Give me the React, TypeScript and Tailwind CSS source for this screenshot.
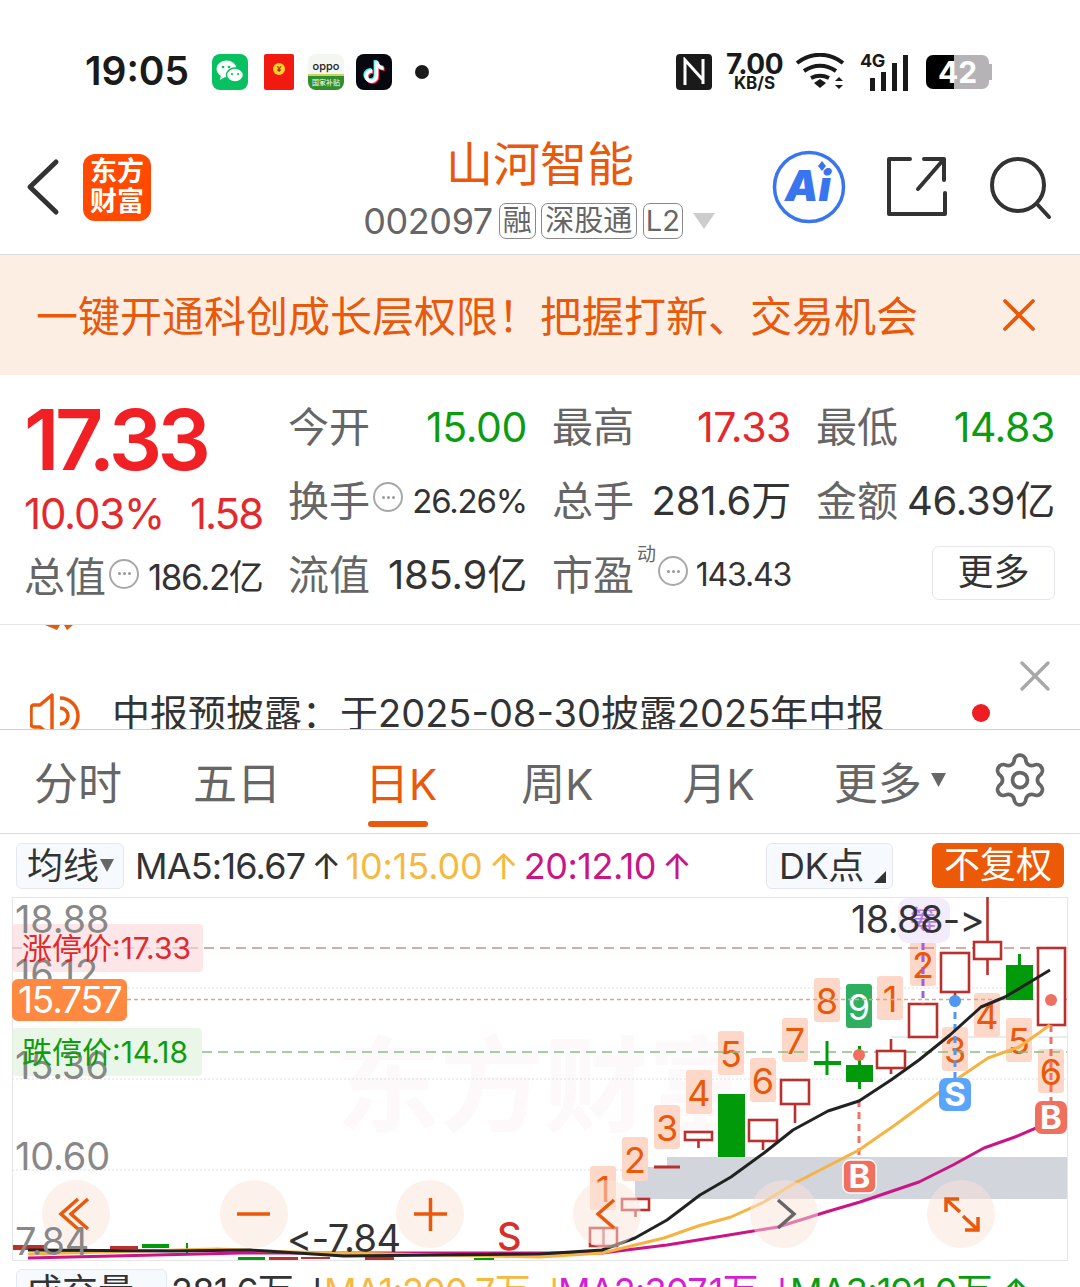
import React from "react";
import { X, Settings } from "lucide-react";
import { FaTiktok } from "react-icons/fa";

const ORANGE = "#e8590c";
const RED = "#b8312f";
const GREEN = "#009a0a";

// x, width, top, bottom, wick top, wick bottom
const hollow = [
  [590, 27, 1228, 1246, 1228, 1246],
  [622, 27, 1199, 1210, 1199, 1217],
  [685, 27, 1132, 1140, 1132, 1148],
  [749, 28, 1120, 1141, 1120, 1150],
  [781, 28, 1080, 1104, 1080, 1123],
  [877, 28, 1051, 1068, 1039, 1074],
  [909, 28, 1004, 1037, 1004, 1037],
  [941, 28, 953, 992, 953, 1000],
  [974, 27, 942, 959, 897, 975],
  [1038, 27, 948, 1025, 948, 1025],
];
const solid = [
  [718, 27, 1094, 1157, 1094, 1157],
  [846, 27, 1065, 1082, 1046, 1089],
  [1006, 27, 965, 1000, 954, 1000],
];
const badges = [
  ["1", 590, 1166], ["2", 622, 1137], ["3", 654, 1105], ["4", 686, 1070], ["5", 718, 1031],
  ["6", 750, 1058], ["7", 782, 1018], ["8", 814, 978], ["1", 877, 976], ["2", 910, 942],
  ["3", 942, 1027], ["4", 974, 993], ["5", 1006, 1018], ["6", 1038, 1049],
] as const;

const ma5 = "28,1250 172,1251 250,1250 344,1256 540,1254 602,1250 635,1238 667,1220 700,1195 731,1177 764,1153 793,1130 828,1111 859,1101 891,1080 919,1060 950,1035 981,1007 1005,997 1050,970";
const ma10 = "28,1254 103,1252 217,1249 293,1252 540,1257 602,1253 664,1238 698,1226 731,1217 764,1202 795,1183 826,1167 859,1150 895,1125 929,1100 960,1077 988,1058 1019,1047 1050,1025";
const ma20 = "28,1258 241,1253 540,1253 602,1253 667,1245 729,1235 778,1227 826,1212 860,1202 919,1182 953,1165 984,1148 1015,1137 1050,1122";

const Dots = () => (
  <span className="w-[30px] h-[30px] rounded-full border-[2px] border-[#a8a8a8] flex items-center justify-center gap-[2px] shrink-0 -translate-y-[4px]">
    <i className="w-[3px] h-[3px] rounded-full bg-[#999]" />
    <i className="w-[3px] h-[3px] rounded-full bg-[#999]" />
    <i className="w-[3px] h-[3px] rounded-full bg-[#999]" />
  </span>
);

const StatusBar = () => (
  <div className="h-[125px] relative flex items-center pl-[85px] pr-[88px] pt-[18px]">
    <span className="text-[39px] font-semibold text-[#1a1a1a] w-[127px]">19:05</span>
    <svg width="36" height="36" viewBox="0 0 36 36" className="rounded-[8px] bg-[#07c160]">
      <ellipse cx="14.5" cy="15" rx="10" ry="8.5" fill="#fff" />
      <path d="M9 21l-1 5 5-3z" fill="#fff" />
      <ellipse cx="23" cy="21" rx="8.5" ry="7" fill="#fff" stroke="#07c160" strokeWidth="1.5" />
      <circle cx="11" cy="13" r="1.3" fill="#07c160" />
      <circle cx="17" cy="13" r="1.3" fill="#07c160" />
      <circle cx="20" cy="20" r="1.1" fill="#07c160" />
      <circle cx="26" cy="20" r="1.1" fill="#07c160" />
    </svg>
    <div className="ml-[16px] w-[30px] h-[36px] bg-[#f21a10] rounded-[2px] flex items-center justify-center pb-[6px]">
      <span className="w-[12px] h-[12px] rounded-full bg-[#ffd21f] text-[8px] leading-[12px] text-center text-[#a33] font-bold">¥</span>
    </div>
    <div className="ml-[14px] w-[36px] h-[36px] rounded-[8px] overflow-hidden bg-[#f4f6f2] flex flex-col">
      <span className="h-[22px] text-[11px] leading-[24px] text-center text-[#222] font-medium border-b-[2px] border-[#c9d65a]">oppo</span>
      <span className="h-[14px] bg-[#2f8f2f] text-[7px] leading-[14px] text-center text-white whitespace-nowrap">国家补贴</span>
    </div>
    <div className="ml-[12px] w-[36px] h-[36px] rounded-[8px] bg-[#07070f] flex items-center justify-center relative">
      <FaTiktok className="absolute text-[#25f4ee] text-[22px] -translate-x-[1px] -translate-y-[1px]" />
      <FaTiktok className="absolute text-[#fe2c55] text-[22px] translate-x-[1px] translate-y-[1px]" />
      <FaTiktok className="absolute text-white text-[22px]" />
    </div>
    <span className="ml-[23px] w-[14px] h-[14px] rounded-full bg-[#1a1a1a]" />

    <div className="ml-auto flex items-center">
      <div className="w-[36px] h-[36px] rounded-[4px] bg-[#1a1a1a] flex items-center justify-center">
        <svg width="26" height="30" viewBox="0 0 26 30" fill="none" stroke="#fff" strokeWidth="3">
          <path d="M4 28V3l18 20M22 27V2" />
        </svg>
      </div>
      <div className="ml-[15px] w-[55px] flex flex-col items-center text-[#1a1a1a] font-bold">
        <span className="text-[28px] leading-[24px] tracking-[-0.5px]">7.00</span>
        <span className="text-[17px] leading-[15px]">KB/S</span>
      </div>
      <svg width="52" height="38" viewBox="0 0 52 38" className="ml-[13px]" fill="none" stroke="#1a1a1a" strokeWidth="4">
        <path d="M2 10c14-11 32-11 46 0M9 18c10-7 22-7 32 0M16 25c6-3 12-3 18 0" />
        <path d="M19 30l6-4 6 4-6 5z" fill="#1a1a1a" stroke="none" />
        <path d="M40 28l4-4 4 4zM40 32l4 4 4-4z" fill="#1a1a1a" stroke="none" />
      </svg>
      <div className="relative ml-[13px] w-[50px] h-[38px]">
        <span className="absolute left-0 -top-[2px] text-[18px] leading-[20px] font-bold text-[#1a1a1a] tracking-[-0.5px]">4G</span>
        <div className="absolute left-[10px] bottom-0 flex items-end gap-[6px]">
          <i className="w-[5px] h-[13px] bg-[#1a1a1a]" />
          <i className="w-[5px] h-[19px] bg-[#1a1a1a]" />
          <i className="w-[5px] h-[28px] bg-[#1a1a1a]" />
          <i className="w-[5px] h-[36px] bg-[#1a1a1a]" />
        </div>
      </div>
      <div className="relative ml-[16px] w-[66px] h-[34px] flex rounded-[7px] overflow-hidden">
        <span className="w-[28px] bg-black" />
        <span className="w-[35px] bg-[#b5b3b5] rounded-r-[7px]" />
        <span className="w-[3px] my-[9px] bg-[#b5b3b5]" />
        <span className="absolute left-[12px] top-0 text-[30px] leading-[34px] font-bold text-white">42</span>
      </div>
    </div>
  </div>
);

const Header = () => (
  <div className="h-[130px] border-b border-[#dcdcdc] flex items-start relative">
    <svg width="36" height="58" viewBox="0 0 36 58" className="absolute left-[25px] top-[33px]" fill="none" stroke="#333" strokeWidth="5" strokeLinecap="round" strokeLinejoin="round">
      <path d="M31 4L5 29l26 25" />
    </svg>
    <div className="absolute left-[83px] top-[29px] w-[68px] h-[67px] rounded-[12px] bg-[#ff4a00] text-white font-bold text-[27px] leading-[30px] text-center pt-[3px]">
      东方<br />财富
    </div>
    <div className="w-full flex flex-col items-center pt-[12px]">
      <span className="text-[47px] leading-[54px] text-[#e8590c]">山河智能</span>
      <div className="flex items-center mt-[10px] mr-[2px] text-[#666] h-[40px]">
        <span className="text-[36px] tracking-[-0.4px]">002097</span>
        <span className="ml-[6px] w-[37px] h-[36px] border border-[#888] rounded-[7px] text-[29px] leading-[33px] text-center">融</span>
        <span className="ml-[5px] w-[96px] h-[36px] border border-[#888] rounded-[7px] text-[29px] leading-[33px] text-center">深股通</span>
        <span className="ml-[6px] w-[40px] h-[36px] border border-[#888] rounded-[7px] text-[29px] leading-[33px] text-center">L2</span>
        <svg width="22" height="16" viewBox="0 0 22 16" className="ml-[10px]"><path d="M0 0h22L11 16z" fill="#cccccc" /></svg>
      </div>
    </div>
    <svg width="74" height="74" viewBox="0 0 74 74" className="absolute left-[772px] top-[25px]">
      <circle cx="37" cy="37" r="34.5" fill="none" stroke="#3a75f0" strokeWidth="3.5" />
      <text x="36" y="51" textAnchor="middle" fontSize="42" fontWeight="900" fontStyle="italic" fill="#3a75f0">Ai</text>
      <path d="M50 11l4 5-4 5-4-5z" fill="#3a75f0" />
    </svg>
    <svg width="60" height="62" viewBox="0 0 60 62" className="absolute left-[887px] top-[31px]" fill="none" stroke="#333" strokeWidth="4" strokeLinecap="round" strokeLinejoin="round">
      <path d="M23 3H2v55h56V37M31 33L57 3M37 3h20v21" />
    </svg>
    <svg width="64" height="66" viewBox="0 0 64 66" className="absolute left-[989px] top-[29px]" fill="none" stroke="#333" strokeWidth="4" strokeLinecap="round">
      <circle cx="29" cy="31" r="26" />
      <path d="M48 50l12 13" />
    </svg>
  </div>
);

const Banner = () => (
  <div className="h-[120px] bg-[#fdeee4] flex items-center pl-[36px] pr-[33px]">
    <span className="text-[42px] leading-none whitespace-nowrap text-[#e8590c] pt-[4px]">一键开通科创成长层权限！把握打新、交易机会</span>
    <X className="ml-auto text-[#e8590c]" size={56} strokeWidth={1.6} />
  </div>
);

const Stat = ({ label, value, color, valueSize, note, sup }: { label: string; value: string; color: string; valueSize: string; note?: boolean; sup?: boolean }) => (
  <div className="flex items-center w-[239px] h-[74px] relative">
    <span className="text-[41px] text-[#666] leading-none">{label}</span>
    {sup && <span className="absolute left-[85px] top-[3px] text-[19px] text-[#666]">动</span>}
    {note && <span className={sup ? "ml-[24px]" : "ml-[3px]"}><Dots /></span>}
    <span className={`ml-auto leading-none whitespace-nowrap ${valueSize}`} style={{ color }}>{value}</span>
  </div>
);

const Quote = () => (
  <div className="h-[250px] border-b border-[#e5e5e5] flex relative">
    <div className="w-[288px] pl-[24px] flex flex-col">
      <span className="text-[84px] leading-[90px] font-semibold text-[#f02024] tracking-[-4.5px] mt-[20px]">17.33</span>
      <div className="flex text-[42px] leading-[48px] text-[#e3292d] mt-[5px] tracking-[-1.2px]">
        <span>10.03%</span>
        <span className="ml-[26px] tracking-[-2px]">1.58</span>
      </div>
      <div className="flex items-center mt-[19px]">
        <span className="text-[41px] text-[#666] leading-none">总值</span>
        <span className="ml-[3px]"><Dots /></span>
        <span className="ml-[9px] text-[35px] text-[#333] leading-none tracking-[-1.4px] whitespace-nowrap">186.2亿</span>
      </div>
    </div>
    <div className="grid grid-cols-[239px_239px_239px] gap-x-[25px] pt-[15px] content-start">
      <Stat label="今开" value="15.00" color="#0c9c12" valueSize="text-[41px] tracking-[-0.4px]" />
      <Stat label="最高" value="17.33" color="#e3292d" valueSize="text-[41px] tracking-[-0.4px]" />
      <Stat label="最低" value="14.83" color="#0c9c12" valueSize="text-[41px] tracking-[-0.4px]" />
      <Stat label="换手" value="26.26%" color="#333" valueSize="text-[33px] tracking-[-1.2px]" note />
      <Stat label="总手" value="281.6万" color="#333" valueSize="text-[40px] tracking-[-0.2px]" />
      <Stat label="金额" value="46.39亿" color="#333" valueSize="text-[40px] tracking-[-0.2px]" />
      <Stat label="流值" value="185.9亿" color="#333" valueSize="text-[40px] tracking-[-0.2px]" />
      <Stat label="市盈" value="143.43" color="#333" valueSize="text-[32px] tracking-[-1.2px]" note sup />
      <div className="flex justify-end items-center h-[74px] pb-[4px]">
        <span className="w-[123px] h-[54px] border border-[#e5e5ea] rounded-[7px] text-[36px] leading-[50px] text-center text-[#333]">更多</span>
      </div>
    </div>
  </div>
);

const Notice = () => (
  <div className="h-[105px] border-b border-[#cfcfcf] relative overflow-hidden">
    <svg width="40" height="8" viewBox="0 0 40 8" className="absolute left-[40px] top-0"><path d="M5 0l12 5 3-5M24 0l3 5 6-5" fill="#e8590c" /></svg>
    <svg width="52" height="46" viewBox="0 0 52 46" className="absolute left-[30px] top-[68px]" fill="none" stroke="#e8590c" strokeWidth="3.5" strokeLinejoin="round">
      <path d="M22 2L10 12H4a3 3 0 0 0-3 3v16a3 3 0 0 0 3 3h6l12 10zM22 2v42" />
      <path d="M30 5a18 18 0 0 1 0 36M30 15a8 8 0 0 1 0 16" />
    </svg>
    <span className="absolute left-[112px] top-[65px] text-[38px] leading-[46px] text-[#333] whitespace-nowrap">中报预披露：于2025-08-30披露2025年中报</span>
    <span className="absolute left-[972px] top-[79px] w-[18px] h-[18px] rounded-full bg-[#f01c24]" />
    <X className="absolute left-[1009px] top-[25px] text-[#a8a8a8]" size={52} strokeWidth={1.6} />
  </div>
);

const Tabs = () => (
  <div className="h-[104px] border-b border-[#dcdcdc] flex items-center pl-[34px] text-[44px] text-[#666] leading-none relative pt-[4px]">
    <span>分时</span>
    <span className="ml-[71px]">五日</span>
    <span className="ml-[84px] text-[#e8590c] relative">
      日<span className="text-[42px]">K</span>
      <i className="absolute left-[3px] top-[59px] w-[60px] h-[6px] rounded-[3px] bg-[#e8590c]" />
    </span>
    <span className="ml-[84px]">周<span className="text-[42px]">K</span></span>
    <span className="ml-[89px]">月<span className="text-[42px]">K</span></span>
    <span className="ml-[79px]">更多</span>
    <svg width="15" height="14" viewBox="0 0 15 14" className="ml-[9px] mb-[8px]"><path d="M0 0h15L7.5 14z" fill="#666" /></svg>
    <Settings className="ml-[44px] text-[#666] -translate-y-[4px]" size={60} strokeWidth={1.5} />
  </div>
);

const MaRow = () => (
  <div className="h-[63px] flex items-center pl-[16px] pr-[16px] text-[36px] leading-none whitespace-nowrap">
    <div className="w-[108px] h-[46px] bg-[#f6f9fd] border border-[#e4e8ee] rounded-[6px] flex items-center pl-[10px] text-[#333]">
      均线
      <svg width="14" height="13" viewBox="0 0 14 13" className="ml-[1px]"><path d="M0 0h14L7 13z" fill="#666" /></svg>
    </div>
    <span className="ml-[11px] text-[#333] tracking-[-0.8px]">MA5:16.67</span>
    <span className="ml-[6px] text-[#333]">↑</span>
    <span className="ml-[4px] text-[#f5b93f] tracking-[-0.1px]">10:15.00</span>
    <span className="ml-[6px] text-[#f5b93f]">↑</span>
    <span className="ml-[5px] text-[#c91585] tracking-[-0.5px]">20:12.10</span>
    <span className="ml-[6px] text-[#c91585]">↑</span>
    <div className="ml-auto w-[127px] h-[46px] bg-[#f6f9fd] border border-[#e4e8ee] rounded-[6px] flex items-center pl-[12px] text-[#333] relative tracking-[-0.5px]">
      DK点
      <svg width="12" height="12" viewBox="0 0 12 12" className="absolute right-[6px] bottom-[5px]"><path d="M12 0v12H0z" fill="#333" /></svg>
    </div>
    <div className="ml-[39px] w-[132px] h-[45px] bg-[#ec5a08] rounded-[6px] text-white text-center leading-[44px]">不复权</div>
  </div>
);

const Chart = () => (
  <svg width="1056" height="364" viewBox="12 897 1056 364" className="block ml-[12px] shrink-0">
    <rect x="12.5" y="897.5" width="1055" height="363" fill="#fff" stroke="#e6e6e6" />
    <text x="336" y="1124" fontSize="104" fontWeight="700" fill="#fdf8fa">东方财富</text>
    {[988, 1079, 1170].map((y) => (
      <line key={y} x1="12" x2="1067" y1={y} y2={y} stroke="#dedede" strokeDasharray="2 2" />
    ))}
    <path d="M667 1157h400v42H635v-32h32z" fill="#d3d5dd" />
    <line x1="891" x2="1067" y1="1037" y2="1037" stroke="#d8d8d8" />

    {badges.map(([n, x, y], i) => (
      <g key={i}>
        <rect x={x} y={y} width="26" height="44" rx="3" fill="#fdd8c8" />
        <text x={x + 13} y={y + 36} fontSize="36" textAnchor="middle" fill={ORANGE}>{n}</text>
      </g>
    ))}
    <rect x="846" y="984" width="26" height="44" rx="3" fill="#2eaf5f" />
    <text x="859" y="1020" fontSize="36" textAnchor="middle" fill="#fff">9</text>

    <rect x="898" y="898" width="52" height="45" rx="10" fill="#f3ecfc" />
    <text x="924" y="931" fontSize="28" textAnchor="middle" fill="#b37be8">筹</text>

    <line x1="12" x2="1067" y1="948" y2="948" stroke="#c98f8a" strokeWidth="1.5" strokeDasharray="10 6" />
    <line x1="127" x2="1067" y1="999.5" y2="999.5" stroke="#d4a98c" strokeWidth="1.5" strokeDasharray="4 3" />
    <line x1="202" x2="1067" y1="1052" y2="1052" stroke="#83c283" strokeWidth="1.5" strokeDasharray="10 6" />

    {/* small bars squashed at the bottom */}
    <g>
      <rect x="13" y="1245" width="32" height="5" fill={RED} />
      <rect x="45" y="1249" width="27" height="5" fill={GREEN} />
      <rect x="110" y="1246" width="28" height="3" fill={RED} />
      <rect x="142" y="1244" width="27" height="4" fill={GREEN} />
      <line x1="187" x2="187" y1="1243" y2="1254" stroke={GREEN} strokeWidth="2" />
      <rect x="238" y="1257" width="27" height="3" fill={GREEN} />
      <rect x="269" y="1257" width="29" height="3" fill={RED} />
      <rect x="301" y="1257" width="29" height="2" fill={RED} />
      <rect x="365" y="1257" width="29" height="3" fill={RED} />
      <rect x="474" y="1258" width="20" height="2" fill={GREEN} />
    </g>

    {hollow.map(([x, w, t, b, wt, wb], i) => (
      <g key={i} stroke={RED} strokeWidth="2.6" fill="none">
        <line x1={x + w / 2} x2={x + w / 2} y1={wt} y2={wb} />
        <rect x={x} y={t} width={w} height={b - t} fill="#fff" fillOpacity={i === 0 ? 0.3 : 1} />
      </g>
    ))}
    {solid.map(([x, w, t, b, wt, wb], i) => (
      <g key={i} fill={GREEN}>
        <line x1={x + w / 2} x2={x + w / 2} y1={wt} y2={wb} stroke={GREEN} strokeWidth="3" />
        <rect x={x} y={t} width={w} height={b - t} />
      </g>
    ))}
    <line x1="814" x2="841" y1="1063" y2="1063" stroke={GREEN} strokeWidth="4" />
    <line x1="827" x2="827" y1="1041" y2="1075" stroke={GREEN} strokeWidth="3" />
    <line x1="654" x2="680" y1="1167" y2="1167" stroke={RED} strokeWidth="3" />

    <line x1="923" x2="923" y1="943" y2="1004" stroke="#a35be0" strokeWidth="3" strokeDasharray="7 5" />
    <line x1="955" x2="955" y1="1000" y2="1080" stroke="#4f97f5" strokeWidth="3" strokeDasharray="7 5" />
    <line x1="859" x2="859" y1="1100" y2="1160" stroke="#ec7368" strokeWidth="3" strokeDasharray="7 5" />
    <line x1="1051" x2="1051" y1="1025" y2="1101" stroke="#ec7368" strokeWidth="3" strokeDasharray="7 5" />
    <circle cx="955" cy="1001" r="6" fill="#4f97f5" />
    <circle cx="859" cy="1055" r="6" fill="#f0705f" />
    <circle cx="1051" cy="1000" r="6" fill="#f0705f" />

    <polyline points={ma20} fill="none" stroke="#c91585" strokeWidth="3" strokeLinejoin="round" />
    <polyline points={ma10} fill="none" stroke="#f5b342" strokeWidth="3" strokeLinejoin="round" />
    <polyline points={ma5} fill="none" stroke="#222" strokeWidth="3" strokeLinejoin="round" />

    <rect x="843" y="1160" width="33" height="33" rx="7" fill="#f0705f" stroke="#fff" strokeWidth="1.5" />
    <text x="859.5" y="1188" fontSize="33" fontWeight="700" textAnchor="middle" fill="#fff">B</text>
    <rect x="939" y="1078" width="32" height="33" rx="7" fill="#5aa5fb" />
    <text x="955" y="1106" fontSize="33" fontWeight="700" textAnchor="middle" fill="#fff">S</text>
    <rect x="1035" y="1101" width="32" height="33" rx="7" fill="#f0705f" />
    <text x="1051" y="1129" fontSize="33" fontWeight="700" textAnchor="middle" fill="#fff">B</text>

    <text x="851" y="933" fontSize="38" letterSpacing="-0.7" fill="#333">18.88-&gt;</text>
    <text x="287" y="1252" fontSize="38" letterSpacing="-0.5" fill="#333">&lt;-7.84</text>
    <text x="497" y="1250" fontSize="38" fontWeight="500" fill="#d6302e">S</text>

    <rect x="12" y="924" width="191" height="48" rx="4" fill="#fbd9dc" fillOpacity="0.65" />
    <rect x="12" y="1028" width="190" height="48" rx="4" fill="#dff3dc" fillOpacity="0.65" />
    <text x="15" y="933" fontSize="38" letterSpacing="-0.2" fill="#888">18.88</text>
    <text x="15" y="987" fontSize="38" letterSpacing="-0.2" fill="#888">16.12</text>
    <text x="15" y="1079" fontSize="38" letterSpacing="-0.2" fill="#888">15.36</text>
    <text x="15" y="1170" fontSize="38" letterSpacing="-0.2" fill="#888">10.60</text>
    <text x="22" y="959" fontSize="30" fill="#e0292e">涨停价:17.33</text>
    <rect x="12" y="979" width="115" height="42" rx="6" fill="#ff8940" />
    <text x="18" y="1013" fontSize="37" letterSpacing="-1.2" fill="#fff">15.757</text>
    <text x="22" y="1063" fontSize="30" fill="#0f9d0f">跌停价:14.18</text>

    {[76, 254, 430, 607, 784, 961].map((cx) => (
      <circle key={cx} cx={cx} cy="1214" r="34" fill="#fbe3da" fillOpacity="0.5" />
    ))}
    <text x="15" y="1255" fontSize="38" letterSpacing="-0.2" fill="#888">7.84</text>
    <g fill="none" stroke={ORANGE} strokeWidth="3.5">
      <path d="M78 1199l-17 15 17 15M88 1199l-17 15 17 15" />
      <path d="M237 1214h33" />
      <path d="M414 1214h33M430.5 1198v33" />
      <path d="M614 1200l-16 14 16 14" />
      <path d="M948 1201l12 11M963 1216l15 14M946 1212v-13h13M978 1217v13h-13" />
    </g>
    <path d="M778 1200l16 14-16 14" fill="none" stroke="#666" strokeWidth="3.5" />
  </svg>
);

const VolumeRow = () => (
  <div className="h-[26px] overflow-hidden flex items-start pl-[16px] text-[36px] leading-[44px] whitespace-nowrap tracking-[-0.8px] pt-[8px]">
    <div className="w-[151px] h-[46px] bg-[#f6f9fd] border border-[#e4e8ee] rounded-[6px] pl-[9px] text-[#333] tracking-normal">成交量</div>
    <span className="ml-[4px] text-[#333] w-[153px]">281.6万 ↓</span>
    <span className="text-[#f5b93f] w-[234px]">MA1:200.7万 ↓</span>
    <span className="text-[#d41fd4] w-[232px]">MA2:307.1万 ↓</span>
    <span className="text-[#0c9c12]">MA3:191.0万 ↑</span>
  </div>
);

export default function App() {
  return (
    <div className="w-[1080px] h-[1287px] overflow-hidden bg-white font-[Inter,'Noto_Sans_CJK_SC',sans-serif] flex flex-col">
      <StatusBar />
      <Header />
      <Banner />
      <Quote />
      <Notice />
      <Tabs />
      <MaRow />
      <Chart />
      <VolumeRow />
    </div>
  );
}
